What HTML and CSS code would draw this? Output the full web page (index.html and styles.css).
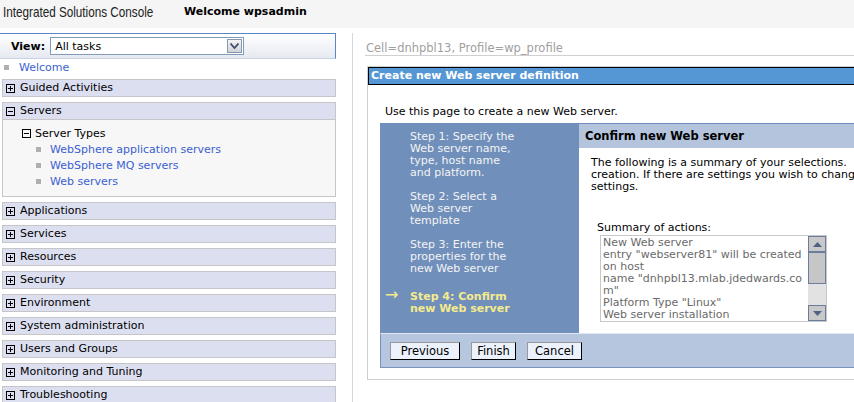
FILE: index.html
```html
<!DOCTYPE html>
<html lang="en">
  <head>
    <meta charset="UTF-8" />
    <title>Integrated Solutions Console</title>
    <link rel="stylesheet" href="styles.css">
  </head>
  <body>
    <div class="topbar">
      <span class="brand"><span class="brand-text">Integrated Solutions Console</span></span>
      <span class="welcome">Welcome wpsadmin</span>
    </div>
    <div class="layout">
      <div class="nav">
        <div class="viewbar">
          <b>View:</b>
          <div class="select">
            <span class="select-text">All tasks</span>
            <span class="select-btn">
              <svg width="9" height="6" viewBox="0 0 9 6"><path d="M0.5 0.5L4.5 5L8.5 0.5" fill="none" stroke="#3d4d6a" stroke-width="1.8"/></svg>
            </span>
          </div>
        </div>
        <div class="nav-link top-link"><span class="bullet"></span><a href="#">Welcome</a></div>

        <div class="group">
          <div class="group-head"><svg class="tog" width="9" height="9"><rect x=".5" y=".5" width="8" height="8" fill="none" stroke="#000"/><path d="M2 4.5h5M4.5 2v5" stroke="#000"/></svg>Guided Activities</div>
        </div>
        <div class="group">
          <div class="group-head"><svg class="tog" width="9" height="9"><rect x=".5" y=".5" width="8" height="8" fill="none" stroke="#000"/><path d="M2 4.5h5" stroke="#000"/></svg>Servers</div>
          <div class="group-body">
            <div class="sub-head"><svg class="tog" width="9" height="9"><rect x=".5" y=".5" width="8" height="8" fill="none" stroke="#000"/><path d="M2 4.5h5" stroke="#000"/></svg>Server Types</div>
            <div class="nav-link sub-link"><span class="bullet"></span><a href="#">WebSphere application servers</a></div>
            <div class="nav-link sub-link"><span class="bullet"></span><a href="#">WebSphere MQ servers</a></div>
            <div class="nav-link sub-link"><span class="bullet"></span><a href="#">Web servers</a></div>
          </div>
        </div>
        <div class="group">
          <div class="group-head"><svg class="tog" width="9" height="9"><rect x=".5" y=".5" width="8" height="8" fill="none" stroke="#000"/><path d="M2 4.5h5M4.5 2v5" stroke="#000"/></svg>Applications</div>
        </div>
        <div class="group">
          <div class="group-head"><svg class="tog" width="9" height="9"><rect x=".5" y=".5" width="8" height="8" fill="none" stroke="#000"/><path d="M2 4.5h5M4.5 2v5" stroke="#000"/></svg>Services</div>
        </div>
        <div class="group">
          <div class="group-head"><svg class="tog" width="9" height="9"><rect x=".5" y=".5" width="8" height="8" fill="none" stroke="#000"/><path d="M2 4.5h5M4.5 2v5" stroke="#000"/></svg>Resources</div>
        </div>
        <div class="group">
          <div class="group-head"><svg class="tog" width="9" height="9"><rect x=".5" y=".5" width="8" height="8" fill="none" stroke="#000"/><path d="M2 4.5h5M4.5 2v5" stroke="#000"/></svg>Security</div>
        </div>
        <div class="group">
          <div class="group-head"><svg class="tog" width="9" height="9"><rect x=".5" y=".5" width="8" height="8" fill="none" stroke="#000"/><path d="M2 4.5h5M4.5 2v5" stroke="#000"/></svg>Environment</div>
        </div>
        <div class="group">
          <div class="group-head"><svg class="tog" width="9" height="9"><rect x=".5" y=".5" width="8" height="8" fill="none" stroke="#000"/><path d="M2 4.5h5M4.5 2v5" stroke="#000"/></svg>System administration</div>
        </div>
        <div class="group">
          <div class="group-head"><svg class="tog" width="9" height="9"><rect x=".5" y=".5" width="8" height="8" fill="none" stroke="#000"/><path d="M2 4.5h5M4.5 2v5" stroke="#000"/></svg>Users and Groups</div>
        </div>
        <div class="group">
          <div class="group-head"><svg class="tog" width="9" height="9"><rect x=".5" y=".5" width="8" height="8" fill="none" stroke="#000"/><path d="M2 4.5h5M4.5 2v5" stroke="#000"/></svg>Monitoring and Tuning</div>
        </div>
        <div class="group">
          <div class="group-head"><svg class="tog" width="9" height="9"><rect x=".5" y=".5" width="8" height="8" fill="none" stroke="#000"/><path d="M2 4.5h5M4.5 2v5" stroke="#000"/></svg>Troubleshooting</div>
        </div>
      </div>

      <div class="content">
        <div class="cell-title">Cell=dnhpbl13, Profile=wp_profile</div>
        <div class="panel">
          <div class="panel-title">Create new Web server definition</div>
          <div class="intro">Use this page to create a new Web server.</div>
          <div class="wizard">
            <div class="wizard-row">
              <div class="steps">
                <div class="step">Step 1: Specify the<br />Web server name,<br />type, host name<br />and platform.</div>
                <div class="step">Step 2: Select a<br />Web server<br />template</div>
                <div class="step">Step 3: Enter the<br />properties for the<br />new Web server</div>
                <div class="step current"><span class="arrow">&rarr;</span>Step 4: Confirm<br />new Web server</div>
              </div>
              <div class="step-main">
                <div class="step-head">Confirm new Web server</div>
                <div class="step-body">
                  <p class="summary-text">The following is a summary of your selections.<br />creation. If there are settings you wish to chang<br />settings.</p>
                  <div class="summary-label">Summary of actions:</div>
                  <div class="summary-box">
                    <div class="summary-lines">New Web server<br />entry "webserver81" will be created<br />on host<br />name "dnhpbl13.mlab.jdedwards.co<br />m"<br />Platform Type "Linux"<br />Web server installation</div>
                    <div class="scrollbar">
                      <div class="sb-btn"><svg width="9" height="5" viewBox="0 0 9 5"><path d="M0 5L4.5 0L9 5Z" fill="#4f6286"/></svg></div>
                      <div class="sb-thumb"></div>
                      <div class="sb-track"></div>
                      <div class="sb-btn"><svg width="9" height="5" viewBox="0 0 9 5"><path d="M0 0L4.5 5L9 0Z" fill="#4f6286"/></svg></div>
                    </div>
                  </div>
                </div>
              </div>
            </div>
            <div class="button-bar">
              <button class="btn btn-prev">Previous</button>
              <button class="btn btn-finish">Finish</button>
              <button class="btn btn-cancel">Cancel</button>
            </div>
          </div>
        </div>
      </div>
    </div>
  </body>
</html>
```

FILE: styles.css
```css
html,
body {
  margin: 0;
  padding: 0;
  overflow: hidden;
}
body {
  width: 854px;
  height: 402px;
  font-family: "DejaVu Sans", Verdana, sans-serif;
  font-size: 11px;
  color: #000;
  background-color: #fff;
}
.topbar {
  height: 28px;
  background-color: #f5f5f5;
  display: flex;
  align-items: center;
}
.brand {
  display: inline-block;
  width: 181px;
  margin-left: 3px;
  margin-top: -6px;
  white-space: nowrap;
}
.brand-text {
  display: inline-block;
  font-family: "Liberation Sans", Arial, sans-serif;
  font-size: 15px;
  color: #222;
  transform: scaleX(0.78);
  transform-origin: left center;
}
.welcome {
  font-weight: bold;
  font-size: 11px;
  margin-top: -6px;
}
.layout {
  display: flex;
  width: 1200px;
  margin-top: 5px;
}
.nav {
  width: 336px;
  flex-shrink: 0;
}
.viewbar {
  height: 24px;
  border-top: 1px solid #5a86c5;
  border-right: 1px solid #5a86c5;
  border-bottom: 1px solid #c9d3e6;
  background: linear-gradient(#ffffff, #e6e9f1);
  display: flex;
  align-items: center;
}
.viewbar b {
  margin-left: 11px;
  margin-right: 5px;
  font-size: 11px;
}
.select {
  width: 192px;
  height: 16px;
  border: 1px solid #7f9db9;
  background-color: #fff;
  display: flex;
  align-items: center;
  justify-content: space-between;
}
.select-text {
  margin-left: 4px;
}
.select-btn {
  width: 15px;
  height: 14px;
  margin-right: 1px;
  border: 1px solid #8a96aa;
  background: linear-gradient(#f4f4f4, #cfd3da);
  display: flex;
  align-items: center;
  justify-content: center;
  box-sizing: border-box;
}
.nav-link {
  display: flex;
  align-items: center;
  height: 16px;
}
.nav-link a {
  color: #3b5fd0;
  text-decoration: none;
}
.bullet {
  width: 5px;
  height: 5px;
  background-color: #b0b0b0;
  display: inline-block;
}
.top-link {
  margin-bottom: 4px;
}
.top-link .bullet {
  margin-left: 4px;
  margin-right: 10px;
}
.group {
  margin: 0 0 5px 2px;
  width: 334px;
}
.group-head {
  height: 16px;
  line-height: 16px;
  border: 1px solid #c6c6c6;
  background-color: #dcdff0;
  display: flex;
  align-items: center;
}
.tog {
  margin-left: 3px;
  margin-right: 5px;
  flex-shrink: 0;
}
.group-body {
  border: 1px solid #c6c6c6;
  border-top: none;
  background-color: #f7f7f7;
  padding: 5px 0 7px 0;
}
.sub-head {
  height: 16px;
  display: flex;
  align-items: center;
  padding-left: 16px;
}
.sub-head .tog {
  margin-right: 4px;
}
.sub-link {
  padding-left: 33px;
}
.sub-link .bullet {
  margin-right: 9px;
}
.content {
  margin-left: 16px;
  border-left: 1px solid #d6d6d6;
  width: 700px;
  flex-shrink: 0;
}
.cell-title {
  margin-left: 12px;
  padding: 9px 0 0 1px;
  line-height: 13px;
  font-size: 11.5px;
  color: #a0a0a0;
  border-bottom: 1px solid #cfcfcf;
}
.panel {
  margin: 10px 0 0 14px;
  border: 1px solid #cfcfcf;
  padding-bottom: 11px;
}
.panel-title {
  height: 16px;
  line-height: 16px;
  border: 1px solid #000;
  background-color: #5596d4;
  color: #fff;
  font-weight: bold;
  padding-left: 2px;
}
.intro {
  padding: 20px 0 0 17px;
  line-height: 14px;
  margin-bottom: 4px;
}
.wizard {
  margin-left: 12px;
}
.wizard-row {
  display: flex;
  height: 210px;
}
.steps {
  width: 199px;
  flex-shrink: 0;
  background-color: #7090bb;
  color: #f4f4f4;
  padding-top: 8px;
  box-sizing: border-box;
}
.step {
  padding-left: 30px;
  line-height: 12px;
  margin-bottom: 12px;
}
.step.current {
  color: #f5ea8c;
  font-weight: bold;
  margin-top: 14px;
}
.arrow {
  display: inline-block;
  width: 25px;
  margin-left: -25px;
  font-weight: normal;
  font-size: 16px;
  line-height: 12px;
}
.step-main {
  flex: 1;
  border-top: 1px solid #7090bb;
}
.step-head {
  height: 24px;
  line-height: 24px;
  background-color: #b4c4dd;
  font-weight: bold;
  font-size: 11.5px;
  padding-left: 6px;
}
.step-body {
  padding: 9px 0 0 12px;
}
.summary-text {
  margin: 0;
  line-height: 12px;
  white-space: nowrap;
}
.summary-label {
  margin: 28px 0 1px 6px;
  line-height: 13px;
}
.summary-box {
  margin-left: 9px;
  width: 227px;
  height: 87px;
  border: 1px solid #c8c8c8;
  box-sizing: border-box;
  display: flex;
}
.summary-lines {
  flex: 1;
  padding: 1px 0 0 2px;
  line-height: 12px;
  color: #6a6a6a;
  white-space: nowrap;
  overflow: hidden;
}
.scrollbar {
  width: 18px;
  display: flex;
  flex-direction: column;
  background-color: #e2e2e2;
}
.sb-btn {
  height: 16px;
  border: 1px solid #6c7c9f;
  background-color: #c9c9c9;
  display: flex;
  align-items: center;
  justify-content: center;
  box-sizing: border-box;
}
.sb-thumb {
  height: 32px;
  border: 1px solid #6c7c9f;
  background-color: #c6c6c6;
  box-sizing: border-box;
}
.sb-track {
  flex: 1;
}
.button-bar {
  height: 25px;
  background-color: #b5c6de;
  border: 1px solid #7a92bc;
  border-top-color: #e0e7f2;
  padding: 8px 0 0 9px;
  display: flex;
  gap: 11px;
  align-items: flex-start;
}
.btn {
  font-family: "DejaVu Sans", Verdana, sans-serif;
  font-size: 11.5px;
  height: 18px;
  padding: 0;
  background-color: #ecf2fc;
  border: 1px solid #000;
  border-top-color: #9a9a9a;
  border-left-color: #9a9a9a;
  line-height: 15px;
  text-align: center;
}
.btn-prev {
  width: 70px;
}
.btn-finish {
  width: 45px;
}
.btn-cancel {
  width: 55px;
}
```
